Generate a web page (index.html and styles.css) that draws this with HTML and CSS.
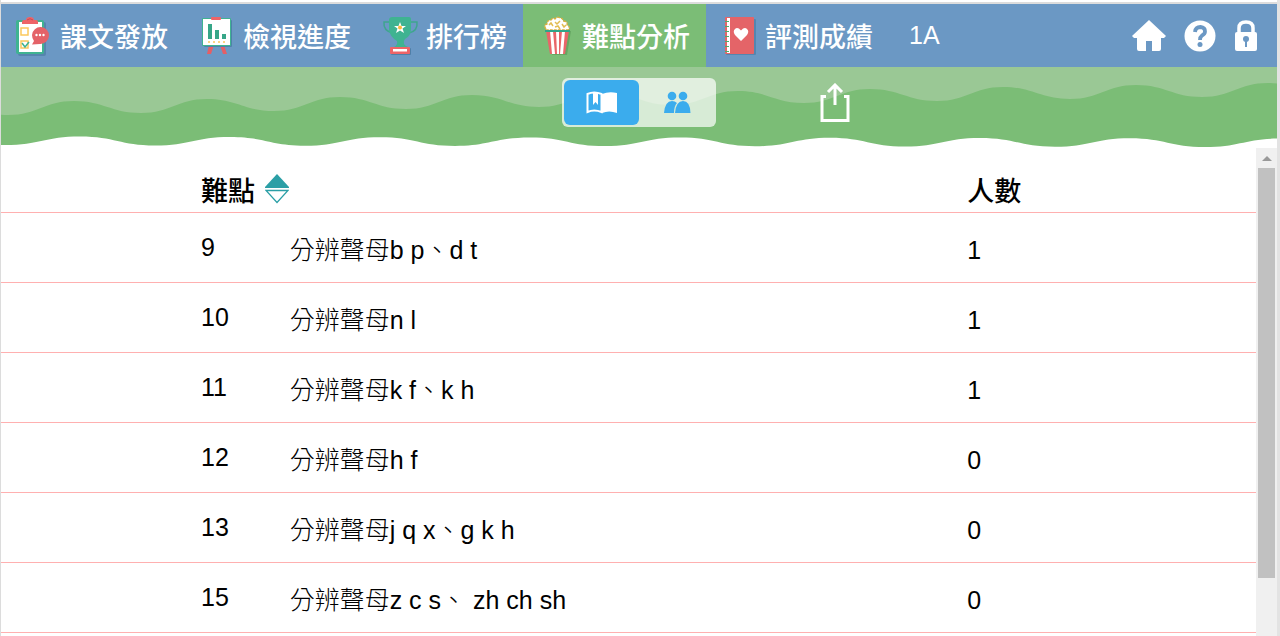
FILE: index.html
```
<!DOCTYPE html>
<html lang="zh-Hant">
<head>
  <meta charset="UTF-8">
  <meta name="viewport" content="width=device-width, initial-scale=1">
  <title>難點分析</title>
  <link rel="stylesheet" href="styles.css">
</head>
<body>
  <!-- Top navigation -->
  <header class="topbar">
    <nav class="menu">
      <a class="menu-item" href="#release">
        <svg class="menu-icon" viewBox="0 0 40 40" aria-hidden="true">
          <rect x="3" y="6" width="28" height="34" rx="2" fill="#5585ae"/>
          <rect x="1" y="4" width="28" height="34" rx="2" fill="#3fb391"/>
          <rect x="4" y="6" width="23" height="30" fill="#fff"/>
          <path d="M7 8V6Q7 4 9 4H11Q11 1 15 1T19 4H21Q23 4 23 6V8Z" fill="#ee6468"/>
          <path d="M12 4Q15 1.500 18 4" stroke="#c84c54" fill="none"/>
          <rect x="6" y="12" width="7" height="7" fill="none" stroke="#fbc85c" stroke-width="1.5"/>
          <rect x="6" y="25" width="7" height="7" fill="none" stroke="#fbc85c" stroke-width="1.5"/>
          <path d="M7 27L10 31L14 26" fill="none" stroke="#3fb391" stroke-width="1.5"/>
          <path d="M17 19A8.500 8.500 0 1 1 25 28L17 28.500L19 25Q17 22.500 17 19Z" fill="#e46268"/>
          <g fill="#fff"><circle cx="21.500" cy="19" r="1.200"/><circle cx="25" cy="19" r="1.200"/><circle cx="28.500" cy="19" r="1.200"/></g>
        </svg>
        <span>課文發放</span>
      </a>
      <a class="menu-item" href="#progress">
        <svg class="menu-icon" viewBox="0 0 40 40" aria-hidden="true">
          <path d="M11 29L9 38H13L16 29ZM22 29L25 38H29L26 29Z" fill="#e45f66"/>
          <rect x="6" y="4" width="28" height="27" rx="1" fill="#4f82a8"/>
          <rect x="4" y="2" width="29" height="28" rx="1" fill="#3fb391"/>
          <rect x="5" y="3" width="27" height="26" fill="#fff"/>
          <rect x="13" y="1" width="10" height="3" rx="1" fill="#ee6468"/>
          <path d="M10 8H14V23H10ZM17 14H21V23H17ZM24 18H28V23H24Z" fill="#36a688"/>
          <path d="M10 26H28" stroke="#fbc85c" stroke-width="1.500" stroke-dasharray="2 3"/>
        </svg>
        <span>檢視進度</span>
      </a>
      <a class="menu-item" href="#ranking">
        <svg class="menu-icon" viewBox="0 0 40 40" aria-hidden="true">
          <path d="M10 6H3Q2 15 12 17M28 6H36Q37 15 28 17" fill="none" stroke="#3fa58f" stroke-width="1.500"/>
          <path d="M8 3Q9 1 11 1H28Q30 1 30 3V13Q30 20 24 23Q22 25 23 28Q24 30 27 31H13Q17 29 16 25Q9 21 8 14Z" fill="#3fb391"/>
          <path d="M19 6L20.500 10H25L21.500 12.500L23 17L19 14.500L15 17L16.500 12.500L13 10H17.500Z" fill="#fff"/>
          <circle cx="19" cy="11.500" r="2" fill="#fbb83c"/>
          <rect x="10" y="32" width="20" height="7" rx="1" fill="#4f7fa8"/>
          <rect x="9" y="31" width="20" height="7" rx="1" fill="#ee6468"/>
          <rect x="12" y="33" width="14" height="2.500" fill="#fff"/>
        </svg>
        <span>排行榜</span>
      </a>
      <a class="menu-item active" href="#difficulty" aria-current="page">
        <svg class="menu-icon" viewBox="0 0 40 40" aria-hidden="true">
          <path d="M10 15H34L30 39H15Z" fill="#66a762"/>
          <path d="M9 13Q6 9 10 8Q10 4 14 4Q16 1 18 3Q20 0 23 2Q26 2 26 5Q31 5 30 9Q34 11 31 14H9Z" fill="#fff" stroke="#d8b040" stroke-width="1.300" stroke-dasharray="3 1"/>
          <path d="M12 9L14 7L16 10M18 6L20 8L23 5M18 11L21 10L23 13M25 8L27 11L29 9" fill="none" stroke="#e2bd52" stroke-width="1.500"/>
          <path d="M9 15H32L28 38H13Z" fill="#e96569"/>
          <path d="M13 15H16L18 38H15ZM19 15H22V38H20ZM25 15H28L26 38H23Z" fill="#fff"/>
          <path d="M8 14H33V16H8Z" fill="#30a488"/>
        </svg>
        <span>難點分析</span>
      </a>
      <a class="menu-item" href="#scores">
        <svg class="menu-icon" viewBox="0 0 40 40" aria-hidden="true">
          <rect x="6" y="3" width="30" height="36" rx="1" fill="#5486b0"/>
          <rect x="5" y="1" width="29" height="37" rx="1" fill="#e46468"/>
          <rect x="7" y="2" width="3" height="35" fill="#fff"/>
          <path d="M7 5V36" stroke="#4fae68" stroke-width="4" stroke-dasharray="1 4"/>
          <path d="M21 25L15 19Q12.500 15.500 15 13T21 14.500Q24.500 10.500 27 13T27 19Z" fill="#fff"/>
        </svg>
        <span>評測成績</span>
      </a>
      <span class="class-name">1A</span>
    </nav>
    <div class="tools">
      <a class="tool" href="#home" aria-label="主頁">
        <svg width="34" height="32" viewBox="0 0 34 32"><path d="M17 0L34 16L32 18H29V29Q29 31 27 31H20V21H14V31H7Q5 31 5 29V18H2L0 16Z" fill="#fff"/></svg>
      </a>
      <a class="tool" href="#help" aria-label="說明">
        <svg width="32" height="32" viewBox="0 0 32 32">
          <circle cx="16" cy="16" r="15.500" fill="#fff"/>
          <path d="M11 12Q11.500 7 16.500 7Q21 7.500 21 11.500Q21 14 18 15.500Q16 17 16 20" fill="none" stroke="#6b98c4" stroke-width="3.800"/>
          <circle cx="16" cy="24.500" r="2.500" fill="#6b98c4"/>
        </svg>
      </a>
      <a class="tool" href="#logout" aria-label="登出">
        <svg width="24" height="32" viewBox="0 0 24 32">
          <path d="M5 14V8Q5 2 12 2T19 8V14" fill="none" stroke="#fff" stroke-width="3.500"/>
          <rect x="1" y="12" width="22" height="19" rx="2" fill="#fff"/>
          <circle cx="12" cy="19" r="3" fill="#6b98c4"/>
          <rect x="11" y="20" width="2" height="7" fill="#6b98c4"/>
        </svg>
      </a>
    </div>
  </header>

  <!-- Green hills with the view switch -->
  <section class="banner">
    <svg class="waves" viewBox="0 0 1276 81" preserveAspectRatio="none" aria-hidden="true">
      <rect width="1276" height="78" fill="#9ac895"/>
      <path fill="#7bbd76" d="M-59 34C-30 34 -23 48 7 48s36-14 66-14 37 12 67 12 36-14 66-14 37 12 67 12 36-14 66-14 36 12 66 12 36-14 66-14 37 12 67 12 36-14 66-14 37 12 67 12 36-14 66-14 36 12 66 12 36-14 66-14 37 12 67 12 36-14 66-14 37 12 67 12 36-14 66-14 36 12 66 12 36-14 66-14 37 12 67 12V81H-59Z"/>
      <path fill="#fff" d="M-71 69C-36 69 -31 78 4 78s40-8.500 75-8.500 40 9 75 9 40-8.500 75-8.500 40 8.700 75 8.700 40-8.500 75-8.500 40 8.700 75 8.700 40-8.500 75-8.500 40 8.700 75 8.700 40-8.500 75-8.500 40 8.700 75 8.700 40-8.500 75-8.500 40 8.800 75 8.800 40-8.500 75-8.500 40 8.700 75 8.700 40-8.500 75-8.500 40 8.800 75 8.800 40-8.500 75-8.500V82H-71Z"/>
    </svg>
    <div class="banner-content">
      <div class="switch">
        <button class="switch-btn selected" type="button" aria-label="課文">
          <svg width="32" height="24" viewBox="0 0 32 24">
            <path d="M15.500 3Q8 0 1.500 3V21Q8 18 15.500 21Z" fill="none" stroke="#fff" stroke-width="2"/>
            <path d="M16 3Q23 0 31 2V22Q23 19 16 22Z" fill="#fff"/>
            <path d="M7 2H12V14L9.500 11L7 14Z" fill="#fff"/>
          </svg>
        </button>
        <button class="switch-btn" type="button" aria-label="學生">
          <svg width="28" height="24" viewBox="0 0 28 24" fill="#3baced">
            <circle cx="9" cy="5" r="4.300"/>
            <circle cx="20" cy="5" r="4.300"/>
            <path d="M1 22Q2 10 9 10Q12 10 14 12Q11 15 11 22Z"/>
            <path d="M12 22Q13 10 20 10T27.500 22Z"/>
          </svg>
        </button>
      </div>
      <button class="share" type="button" aria-label="匯出">
        <svg width="30" height="40" viewBox="0 0 30 40" fill="none" stroke="#fff" stroke-width="3">
          <path d="M6 13.500H2V37.500H28V13.500H24"/>
          <path d="M15 22V2M8 9L15 2L22 9"/>
        </svg>
      </button>
    </div>
  </section>

  <!-- Difficulty list -->
  <main class="content">
    <div class="list">
      <table class="points">
        <colgroup>
          <col class="col-no">
          <col class="col-name">
          <col class="col-count">
        </colgroup>
        <thead>
          <tr>
            <th class="no" colspan="2" scope="col">
              <button class="sort" type="button">難點
                <svg width="24" height="30" viewBox="0 0 24 30" aria-hidden="true">
                  <path d="M12 0L24 13V14H0V13Z" fill="#2b9fa6"/>
                  <path d="M1 16.500H23L12 28.500Z" fill="none" stroke="#2b9fa6" stroke-width="1.300"/>
                </svg>
              </button>
            </th>
            <th scope="col">人數</th>
          </tr>
        </thead>
        <tbody>
          <tr><td class="no">9</td><td>分辨聲母b p、d t</td><td class="count">1</td></tr>
          <tr><td class="no">10</td><td>分辨聲母n l</td><td class="count">1</td></tr>
          <tr><td class="no">11</td><td>分辨聲母k f、k h</td><td class="count">1</td></tr>
          <tr><td class="no">12</td><td>分辨聲母h f</td><td class="count">0</td></tr>
          <tr><td class="no">13</td><td>分辨聲母j q x、g k h</td><td class="count">0</td></tr>
          <tr><td class="no">15</td><td>分辨聲母z c s、 zh ch sh</td><td class="count">0</td></tr>
        </tbody>
      </table>
    </div>
    <div class="scrollbar" aria-hidden="true">
      <div class="scroll-up"></div>
      <div class="scroll-thumb"></div>
    </div>
  </main>
</body>
</html>
```
FILE: styles.css
```
* {
  box-sizing: border-box;
}
body {
  margin: 0;
  height: 100vh;
  display: flex;
  flex-direction: column;
  overflow: hidden;
  padding-top: 2px;
  border-right: 3px solid #e3e3e3;
  border-left: 1px solid #dcdcdc;
  background: #fff;
  color: #000;
  font-family: "Liberation Sans", "Noto Sans CJK TC", sans-serif;
}
button {
  padding: 0;
  border: none;
  background: none;
  color: inherit;
  font: inherit;
  cursor: pointer;
}
svg {
  display: block;
}

/* Top navigation */
.topbar {
  display: flex;
  justify-content: space-between;
  flex: none;
  height: 65px;
  border-top: 2px solid #dcdcdc;
  background: #6b98c4;
  color: #fff;
}
.menu {
  display: flex;
}
.menu-item {
  display: flex;
  align-items: center;
  gap: 5px;
  padding: 0 16px 0 14px;
  color: #fff;
  font-size: 27px;
  font-weight: 500;
  text-decoration: none;
  white-space: nowrap;
}
.menu-item.active {
  background: #7bbd76;
}
.menu-icon {
  width: 40px;
  height: 40px;
}
.class-name {
  align-self: center;
  padding-left: 20px;
  font-size: 25px;
}
.tools {
  display: flex;
  align-items: center;
  gap: 18px;
  padding-right: 19px;
}

/* Green hills */
.banner {
  position: relative;
  flex: none;
  height: 81px;
}
.waves {
  position: absolute;
  top: 0;
  left: 0;
  width: 100%;
  height: 100%;
}
.banner-content {
  position: relative;
  display: grid;
  grid-template-columns: 1fr auto 1fr;
  padding-top: 11px;
}
.switch {
  grid-column: 2;
  display: flex;
  padding: 2px;
  border-radius: 6px;
  background: rgba(255, 255, 255, 0.7);
}
.switch-btn {
  display: flex;
  align-items: center;
  justify-content: center;
  width: 75px;
  height: 45px;
  border-radius: 6px;
}
.switch-btn.selected {
  background: #3baced;
}
.share {
  justify-self: start;
  margin-left: 104px;
}

/* Difficulty list */
.content {
  display: flex;
  flex: 1;
  min-height: 0;
}
.list {
  flex: 1;
  overflow: hidden;
}
.points {
  width: 100%;
  table-layout: fixed;
  border-collapse: separate;
  border-spacing: 0;
  font-size: 25px;
  font-weight: 300;
}
.col-no {
  width: 23%;
}
.col-name {
  width: 54%;
}
.points th,
.points td {
  height: 70px;
  padding: 0;
  border-bottom: 1px solid #ffb0b0;
  text-align: left;
  white-space: nowrap;
}
.points th {
  height: 65px;
  padding-top: 18px;
  font-size: 27px;
  font-weight: 500;
}
.points .no {
  padding-left: 200px;
}
.points .count {
  padding-top: 6px;
}
.sort {
  display: flex;
  align-items: center;
  gap: 10px;
}

/* Scrollbar */
.scrollbar {
  display: flex;
  flex-direction: column;
  flex: none;
  width: 21px;
  padding: 0 2px;
  background: #f0f0f0;
}
.scroll-up {
  display: flex;
  align-items: center;
  justify-content: center;
  height: 20px;
}
.scroll-up::before {
  content: "";
  border: 5px solid transparent;
  border-top: none;
  border-bottom-color: #999;
}
.scroll-thumb {
  height: 84%;
  background: #c1c1c1;
}
```
